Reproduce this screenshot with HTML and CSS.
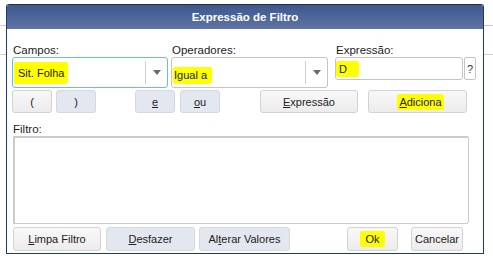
FILE: index.html
```html
<!DOCTYPE html>
<html lang="pt">
<head>
    <meta charset="UTF-8">
    <title>Expressão de Filtro</title>
    <link rel="stylesheet" href="styles.css">
</head>
<body>
    <div class="dialog">
        <div class="titlebar">Expressão de Filtro</div>

        <div class="dialog-body">
            <div class="fields">
                <div class="field field-campos">
                    <label>Campos:</label>
                    <div class="select focused">
                        <span class="value"><span class="mark mark-campos">Sit. Folha</span></span>
                        <span class="arrow"></span>
                    </div>
                </div>
                <div class="field field-oper">
                    <label>Operadores:</label>
                    <div class="select">
                        <span class="value"><span class="mark mark-oper">Igual a</span></span>
                        <span class="arrow"></span>
                    </div>
                </div>
                <div class="field field-expr">
                    <label>Expressão:</label>
                    <div class="expr-row">
                        <div class="input"><span class="mark mark-d">D</span></div>
                        <button class="help">?</button>
                    </div>
                </div>
            </div>

            <div class="ops">
                <button class="btn w40">(</button>
                <button class="btn blue w40 g4">)</button>
                <button class="btn blue w40 g39"><u>e</u></button>
                <button class="btn blue w40 g5"><u>o</u>u</button>
                <button class="btn btn-expr g40"><u>E</u>xpressão</button>
                <button class="btn btn-add g10"><span class="mark mark-add"><u>A</u>diciona</span></button>
            </div>

            <div class="filter">
                <label>Filtro:</label>
                <div class="filter-box"></div>
            </div>

            <div class="actions">
                <button class="btn btn-limpa"><u>L</u>impa Filtro</button>
                <button class="btn blue btn-desf g5"><u>D</u>esfazer</button>
                <button class="btn blue btn-alt g4">Al<u>t</u>erar Valores</button>
                <button class="btn btn-ok g57"><span class="mark mark-ok">Ok</span></button>
                <button class="btn btn-cancel g13">Cancelar</button>
            </div>
        </div>
    </div>
</body>
</html>
```

FILE: styles.css
```css
/* pagina de fundo com as linhas cinza por tras do dialogo */
html, body {
    margin: 0;
    height: 100%;
}

body {
    font-family: "Liberation Sans", Arial, sans-serif;
    font-size: 11px;
    color: #222;
    background: linear-gradient(#fff 25px, #c8c8c8 25px, #c8c8c8 26px, #fff 26px,
                                #fff 54px, #d0d0d0 54px, #d0d0d0 55px, #fff 55px);
    overflow: hidden;
}

.dialog {
    margin: 4px 0 0 6px;
    width: 478px;
    box-sizing: border-box;
    border: 1px solid #1d3d68;
    border-top-color: #2e2e2e;
    border-radius: 3px 3px 0 0;
    background: #fff;
}

.titlebar {
    height: 24px;
    line-height: 24px;
    text-align: center;
    color: #fff;
    font-weight: bold;
    font-size: 11.5px;
    background: linear-gradient(#3c598e, #5f73a4);
    border-radius: 2px 2px 0 0;
}

.dialog-body {
    padding: 14px 0 2px 5px;
}

label {
    display: block;
    height: 14px;
    line-height: 14px;
    font-size: 11.5px;
    color: #222;
    padding-left: 1px;
}

/* linha dos campos */
.fields {
    display: flex;
}

.field-campos { width: 156px; margin-right: 3px; }
.field-oper { width: 157px; margin-right: 7px; }
.field-expr { width: 141px; }

.select {
    height: 31px;
    box-sizing: border-box;
    border: 1px solid #c4c4c4;
    border-radius: 3px;
    display: flex;
    align-items: center;
    background: #fff;
}

.select.focused {
    border-color: #6cbbe0;
}

.select .value {
    flex: 1;
    height: 100%;
    display: flex;
    align-items: center;
    padding-left: 1px;
    border-right: 1px solid #cfcfcf;
    margin: 3px 0;
    height: 23px;
}

.field-oper .select .value {
    padding-top: 5px;
    box-sizing: border-box;
}

.select .arrow {
    width: 21px;
    height: 100%;
    position: relative;
}

.select .arrow::after {
    content: "";
    position: absolute;
    left: 7px;
    top: 12px;
    border-left: 4px solid transparent;
    border-right: 4px solid transparent;
    border-top: 5px solid #6a6a6a;
}

.expr-row {
    display: flex;
    gap: 1px;
}

.input {
    width: 128px;
    height: 23px;
    box-sizing: border-box;
    border: 1px solid #c4c4c4;
    border-radius: 3px;
    display: flex;
    align-items: center;
    padding-left: 0;
}

.help {
    width: 12px;
    height: 23px;
    padding: 0;
    border: 1px solid #c4c4c4;
    border-radius: 2px;
    background: #fff;
    font-family: inherit;
    font-size: 11px;
    color: #333;
}

/* marca texto amarelo */
.mark {
    background: #ffff00;
    display: inline-block;
    border-radius: 2px;
}

.mark-campos { padding: 5px 4px 5px 4px; }
.mark-oper { padding: 2px 5px 3px 1px; }
.mark-d { padding: 2px 12px 2px 3px; }
.mark-add { padding: 2px 2px; margin-left: 6px; }
.mark-ok { padding: 2px 5px; }

/* botoes */
.btn {
    height: 23px;
    padding: 0;
    box-sizing: border-box;
    border: 1px solid #d2d2d2;
    border-radius: 3px;
    background: linear-gradient(#f8f8f8, #ececec);
    font-family: inherit;
    font-size: 11px;
    color: #222;
}

.btn.blue {
    background: #e3e7ef;
    border-color: #d4d8e0;
}

.ops {
    display: flex;
    margin-top: 2px;
}

.w40 { width: 40px; }
.btn-expr { width: 98px; }
.btn-add { width: 99px; }

.g4 { margin-left: 4px; }
.g5 { margin-left: 5px; }
.g10 { margin-left: 10px; }
.g13 { margin-left: 13px; }
.g39 { margin-left: 39px; }
.g40 { margin-left: 40px; }
.g57 { margin-left: 57px; }

/* area do filtro */
.filter {
    margin-top: 10px;
    padding-left: 1px;
}

.filter label {
    height: 13px;
    line-height: 13px;
    padding-left: 0;
}

.filter-box {
    width: 456px;
    height: 88px;
    box-sizing: border-box;
    border: 2px solid #cbcbcb;
    border-right-width: 1px;
    border-bottom-width: 1px;
    border-radius: 0 2px 3px 0;
}

.actions {
    display: flex;
    margin-top: 3px;
    padding-left: 1px;
}

.actions .btn { height: 24px; }

.btn-limpa { width: 88px; }
.btn-desf { width: 89px; }
.btn-alt { width: 91px; }
.btn-ok { width: 51px; }
.btn-cancel { width: 52px; }
```
